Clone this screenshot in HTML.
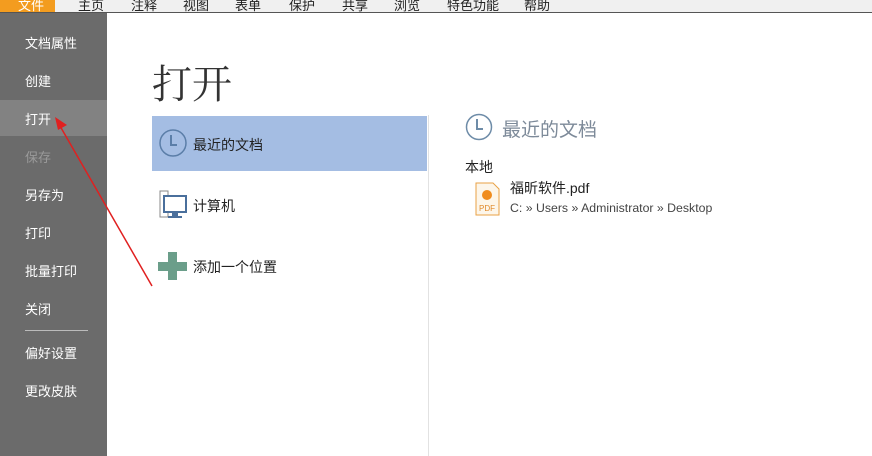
<!DOCTYPE html>
<html><head><meta charset="utf-8"><style>
body{margin:0;width:872px;height:456px;overflow:hidden;background:#fff;font-family:"Liberation Sans","Noto Sans CJK SC",sans-serif;position:relative}
.a{position:absolute}
.menu{left:0;top:0;width:872px;height:12px;background:#f0f0f0;border-bottom:1px solid #555;overflow:hidden}
.menu span{position:absolute;top:-5px;font-size:13px;color:#222}
.side{left:0;top:13px;width:107px;height:443px;background:#6b6b6b}
.side div{position:absolute;left:25px;color:#fff;font-size:13px}
</style></head><body>
<div class="a menu">
<div class="a" style="left:0;top:0;width:55px;height:12px;background:#f39c1f"></div>
<span style="left:18px;color:#fff">文件</span><span style="left:78px">主页</span><span style="left:131px">注释</span><span style="left:183px">视图</span><span style="left:235px">表单</span><span style="left:289px">保护</span><span style="left:342px">共享</span><span style="left:394px">浏览</span><span style="left:447px">特色功能</span><span style="left:524px">帮助</span>
</div>
<div class="a side">
<div style="left:0;top:87px;width:107px;height:36px;background:#828282"></div>
<div style="top:20px">文档属性</div>
<div style="top:58px">创建</div>
<div style="top:96px">打开</div>
<div style="top:134px;color:#9a9a9a">保存</div>
<div style="top:172px">另存为</div>
<div style="top:210px">打印</div>
<div style="top:248px">批量打印</div>
<div style="top:286px">关闭</div>
<div style="top:317px;width:63px;height:1px;background:#bbb"></div>
<div style="top:330px">偏好设置</div>
<div style="top:368px">更改皮肤</div>
</div>
<div class="a" style="left:152px;top:53px;font-size:40px;color:#333;font-family:'Noto Serif CJK SC',serif">打开</div>
<div class="a" style="left:428px;top:115px;width:1px;height:341px;background:#e2e2e2"></div>
<div class="a" style="left:152px;top:116px;width:275px;height:55px;background:#a4bde3"></div>
<svg class="a" style="left:158px;top:128px" width="30" height="30"><circle cx="15" cy="15" r="13" fill="none" stroke="#5b7ea8" stroke-width="1.5"/><path d="M13 7v10h6" fill="none" stroke="#5b7ea8" stroke-width="2"/></svg>
<div class="a" style="left:193px;top:135px;font-size:14px;color:#222">最近的文档</div>
<svg class="a" style="left:158px;top:190px" width="32" height="30"><path d="M2 1h8v26H2z" fill="none" stroke="#888" stroke-width="1"/><rect x="6" y="6" width="22" height="16" fill="#fff" stroke="#4a6f9c" stroke-width="2"/><path d="M14 23h6v3h4v2H10v-2h4z" fill="#4a6f9c"/></svg>
<div class="a" style="left:193px;top:196px;font-size:14px;color:#222">计算机</div>
<svg class="a" style="left:158px;top:252px" width="30" height="28"><path d="M10 0h9v10h10v9H19v9h-9V19H0v-9h10z" fill="#6b9e8a"/></svg>
<div class="a" style="left:193px;top:257px;font-size:14px;color:#222">添加一个位置</div>
<svg class="a" style="left:465px;top:113px" width="28" height="28"><circle cx="14" cy="14" r="12.5" fill="none" stroke="#6e8ca8" stroke-width="1.5"/><path d="M12 6v10h6" fill="none" stroke="#6e8ca8" stroke-width="2"/></svg>
<div class="a" style="left:502px;top:115px;font-size:19px;color:#7d8a99">最近的文档</div>
<div class="a" style="left:465px;top:157px;font-size:14px;color:#222">本地</div>
<svg class="a" style="left:475px;top:182px" width="26" height="34"><path d="M1 1h17l6 6v26H1z" fill="#fdf6ea" stroke="#e9a246"/><circle cx="12" cy="13" r="5" fill="#f08c1e"/><text x="4" y="29" font-size="8" fill="#e08a2a" font-family="Liberation Sans">PDF</text></svg>
<div class="a" style="left:510px;top:178px;font-size:14px;color:#222">福昕软件.pdf</div>
<div class="a" style="left:510px;top:201px;font-size:12.3px;color:#444">C: » Users » Administrator » Desktop</div>
<svg class="a" style="left:0;top:0" width="872" height="456"><line x1="152" y1="286" x2="60" y2="126" stroke="#e02020" stroke-width="1.5"/><path d="M55 117l12 8-9 5z" fill="#e02020"/></svg>
</body></html>
